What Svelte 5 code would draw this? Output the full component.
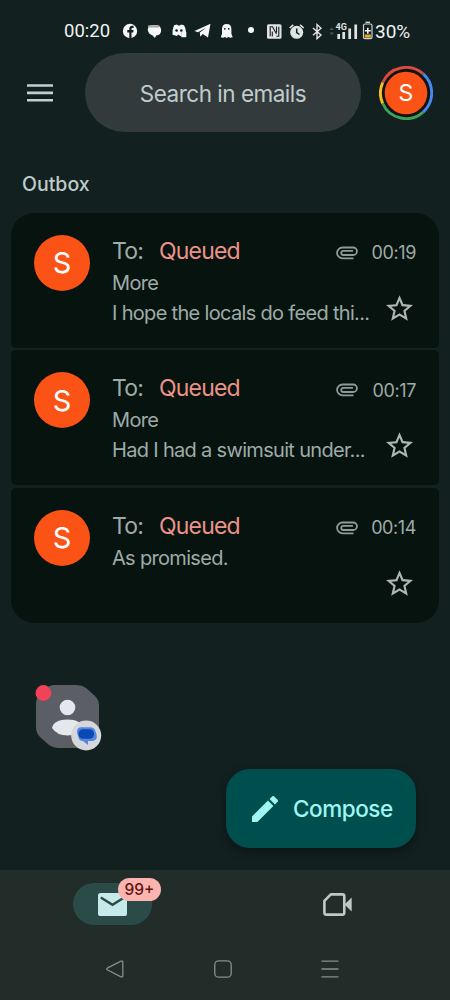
<script lang="ts">
	interface Mail {
		id: number;
		lines: string[];
		time: string;
	}

	const mails: Mail[] = [
		{ id: 1, lines: ['More', 'I hope the locals do feed thi...'], time: '00:19' },
		{ id: 2, lines: ['More', 'Had I had a swimsuit under...'], time: '00:17' },
		{ id: 3, lines: ['As promised.'], time: '00:14' }
	];

	let unread = $state('99+');
</script>

<div class="screen">
	<div class="status">
		<span class="clock">00:20</span>
		<svg class="notifications" viewBox="120 20 136 22" width="136" height="22" fill="#f4f7f6">
			<circle cx="130" cy="31" r="7.2" />
			<path d="M129.3 38.400v-6h-2v-2.4h2v-1.3c0-2 1.1-3 3-3h1.3v2.2h-1.1c-.8 0-1 .5-1 1.2v.9h2.1l-.4 2.4h-1.7v6z" fill="#12201f" />
			<path d="M147.7 30q0-5 6.3-5 7.2 0 7.2 5.2 0 4.7-5 5.3l-1.3 2.6-2.6-2.8q-3.6-1-4.6-5.3z" />
			<path d="M149 26.400h9.500" stroke="#a2aaa8" stroke-width="2.200" stroke-linecap="round" />
			<path d="M174 25.200l3-.8 1 1.100h2l1-1.100 3 .8q2 3 2 6.800h-4.500v4h-1.500l-1-1.300h-1l-1 1.300-4.500-1.300q-.2-5.400 1.500-9.500z" />
			<circle cx="176.600" cy="30.500" r="1.300" fill="#12201f" />
			<circle cx="181.300" cy="30.500" r="1.300" fill="#12201f" />
			<rect x="181.300" y="32" width="5" height="5.200" />
			<path d="M194.500 31l16-7.200-2.500 13.700-5.300-3.400-2.400 2.600-.5-4.100 6.500-5-8.300 4.600z" />
			<path d="M220.800 37.300l1.200-3.500v-4.500q0-5.300 4.700-5.300t4.700 5.300v4.500l1.300 3.500-2.500.5-1.800-.8-1.700 1-1.700-1-1.800.8z" />
			<circle cx="224.800" cy="28.800" r=".9" fill="#12201f" />
			<circle cx="228.700" cy="28.800" r=".9" fill="#12201f" />
			<circle cx="251" cy="30" r="3" />
		</svg>
		<svg class="system" viewBox="265 18 110 24" width="110" height="24" fill="#dfe3e2">
			<rect x="267" y="23.300" width="14.500" height="14.500" rx="1.500" />
			<path d="M270.200 35.200v-9.400h2.300l4 7.200M272.300 30.500v5M278.800 25.800v9.400h-2.300M276.500 25.500v6" fill="none" stroke="#12201f" stroke-width="1.100" />
			<circle cx="296.700" cy="31.300" r="6.500" />
			<path d="M289.700 27l3.600-3.200M303.700 27l-3.600-3.200" stroke="#dfe3e2" stroke-width="1.600" />
			<path d="M296.700 27.500v4l2.800 2" fill="none" stroke="#12201f" stroke-width="1.500" />
			<path d="M313 27l8 7-4 3.700V23.500l4 3.700-8 7" fill="none" stroke="#dfe3e2" stroke-width="1.400" />
			<path d="M329.500 29l2.200-2.600 2.200 2.600zM329.500 31.500l2.200 2.600 2.200-2.600z" fill="#4c5654" />
			<text x="335.500" y="29.300">4G</text>
			<path d="M338.700 33v5M343.700 31v7M349.700 27.500V38M355.700 23.500V38" stroke="#dfe3e2" stroke-width="2.700" />
			<rect x="363.500" y="23" width="8.500" height="14.700" rx="1.500" fill="none" stroke="#cfd4d2" stroke-width="1.200" />
			<path d="M365.500 21.300h4.500" stroke="#cfd4d2" stroke-width="1.400" />
			<path d="M364.700 33.500h6.200v3.200h-6.200z" fill="#e5a83b" />
			<path d="M367.800 26.800v6M364.900 29.800h5.800" stroke="#fff" stroke-width="1.500" />
		</svg>
		<span class="battery">30%</span>
	</div>

	<header>
		<svg class="menu" viewBox="0 0 26 18" width="26" height="18">
			<path d="M0 1.500h26M0 8.900h26M0 16.300h26" stroke="#c0d0d0" stroke-width="2.600" />
		</svg>
		<div class="search"><span>Search in emails</span></div>
		<div class="account">
			<svg viewBox="0 0 54 54" width="54" height="54" fill="none">
				<circle cx="27" cy="27" r="25" fill="#111413" />
				<g stroke-width="2.900">
					<path d="M3.700 16.500A25.700 25.700 0 0 1 44.200 7.900" stroke="#d84b40" />
					<path d="M44.200 7.900A25.700 25.700 0 0 1 44.200 46.100" stroke="#4788ed" />
					<path d="M44.200 46.100A25.700 25.700 0 0 1 3.700 37.500" stroke="#3da25a" />
					<path d="M3.700 37.500A25.700 25.700 0 0 1 3.700 16.500" stroke="#f5c026" />
				</g>
				<circle cx="27" cy="27" r="21.300" fill="#fb5215" />
			</svg>
			<span>S</span>
		</div>
	</header>

	<h2>Outbox</h2>

	<main>
		{#each mails as mail (mail.id)}
			<article>
				<div class="avatar">S</div>
				<div class="body">
					<div class="to"><span>To:</span><span class="queued">Queued</span></div>
					{#each mail.lines as line}
						<p>{line}</p>
					{/each}
				</div>
				<div class="meta">
					<div class="when">
						<svg viewBox="0 0 22 14" width="22" height="14" fill="none" stroke="#8e9c99" stroke-width="1.800">
							<path d="M17.500 12.300H6.500a5.400 5.400 0 0 1 0-10.800h10.700a3.700 3.700 0 0 1 0 7.500H7.300a2.050 2.050 0 0 1 0-4.100h9.700" />
						</svg>
						<span>{mail.time}</span>
					</div>
					<svg class="star" viewBox="2 2 20 19" width="27" height="26" fill="#acb6b3">
						<path d="M22 9.240l-7.190-.62L12 2 9.190 8.630 2 9.240l5.460 4.730L5.820 21 12 17.270 18.180 21l-1.630-7.030L22 9.240zM12 15.400l-3.760 2.270 1-4.280-3.320-2.880 4.380-.38L12 6.100l1.710 4.040 4.380.38-3.320 2.880 1 4.280L12 15.400z" />
					</svg>
				</div>
			</article>
		{/each}
	</main>

	<button class="compose" type="button">
		<svg viewBox="3 3 18 18" width="26" height="26" fill="#9ff6f2">
			<path d="M3 17.250V21h3.750L17.810 9.940l-3.750-3.750L3 17.250zM20.710 7.040a1 1 0 0 0 0-1.410l-2.340-2.340a1 1 0 0 0-1.410 0l-1.830 1.830 3.750 3.750 1.830-1.830z" />
		</svg>
		<span>Compose</span>
	</button>

	<footer>
		<nav class="tabs">
			<div class="tab active">
				<svg viewBox="0 0 29 23" width="29" height="23">
					<rect width="29" height="23" rx="2.600" fill="#c6e9e9" />
					<path d="M2.800 4.500l11.700 7.300 11.700-7.300" fill="none" stroke="#2b4b49" stroke-width="2.500" />
				</svg>
				<span class="badge">{unread}</span>
			</div>
			<div class="tab">
				<svg viewBox="0 0 29 23" width="29" height="23">
					<path d="M7.800 1.400h11.700q1.800 0 1.800 1.800v16.600q0 1.800-1.800 1.800H3.200q-1.800 0-1.800-1.800V7.800z" fill="none" stroke="#bfc9c7" stroke-width="2.600" stroke-linejoin="round" />
					<path d="M21.500 11.500L28.700 4.500v14z" fill="#bfc9c7" />
				</svg>
			</div>
		</nav>
		<nav class="keys">
			<svg viewBox="0 0 18 18" width="18" height="18">
				<path d="M1.200 8.200L15 1.200q1.800-.6 1.800 1v13.600q0 1.600-1.800 1L1.200 9.800q-1-.8 0-1.600z" />
			</svg>
			<svg viewBox="0 0 18 18" width="18" height="18"><rect x=".8" y=".8" width="16.400" height="16.400" rx="3.800" /></svg>
			<svg viewBox="0 0 18 18" width="18" height="18"><path d="M.5 1.200h17M.5 9h17M.5 16.800h17" /></svg>
		</nav>
	</footer>

	<!-- floating chat head -->
	<svg class="bubble" viewBox="34 683 70 70" width="70" height="70">
		<path d="M54 685H77Q82 685 86 688L95 696Q99 700 99 706V732L84 748H58Q53 748 49 745L40 737Q36 733 36 727V704Q36 698 40 693L46 688Q50 685 54 685Z" fill="#5b5f65" />
		<circle cx="67.500" cy="707.500" r="7.800" fill="#e4e7ec" />
		<path d="M52 728q2-8.500 15.500-8.500T83 728q-5 7.500-15.500 7.500T52 728z" fill="#e4e7ec" />
		<circle cx="43.400" cy="693" r="7.900" fill="#f04358" />
		<circle cx="86.200" cy="735.500" r="15" fill="#d5d7da" />
		<path d="M81.500 727.300h8.500q4.500 0 5.500 4l1 3q1.500 6-4 6.700h-4.500v4l-5-4q-4 0-4.800-4.500l-1.200-4q-.5-5.200 4.500-5.200z" fill="#5585dc" />
		<rect x="78.500" y="729.300" width="15.500" height="9.500" rx="4.500" fill="#0849b5" />
	</svg>
</div>

<style>
	:global(body) {
		margin: 0;
		background: #12201f;
	}

	.screen {
		position: relative;
		display: flex;
		flex-direction: column;
		width: 450px;
		height: 1000px;
		overflow: hidden;
		background: #12201f;
		font-family: Inter, "Liberation Sans", sans-serif;
		color: #9fabA8;
	}

	svg {
		display: block;
		flex: none;
	}

	.status {
		display: flex;
		align-items: center;
		height: 53px;
		padding: 9px 0 0 64px;
		box-sizing: border-box;
		font: 500 18.500px Roboto, sans-serif;
		color: #f0f3f2;
	}

	.clock {
		width: 56px;
		font-weight: 400;
	}

	.notifications {
		margin-right: 9px;
	}

	.system text {
		font: 700 9px Roboto, sans-serif;
	}

	.battery {
		font-size: 19px;
		font-weight: 400;
	}

	header {
		display: flex;
		align-items: center;
		height: 79px;
		padding-left: 27px;
	}

	.search {
		display: flex;
		align-items: center;
		justify-content: center;
		width: 276px;
		height: 79px;
		margin: 0 18px 0 32px;
		border-radius: 40px;
		background: #323a3c;
		font-size: 22.500px;
		letter-spacing: -0.500px;
		color: #c0cccb;
	}

	.search span {
		padding-top: 2px;
	}

	.account {
		display: grid;
		place-items: center;
	}

	.account > * {
		grid-area: 1 / 1;
	}

	.account span {
		font-size: 23px;
		color: #fff;
	}

	h2 {
		margin: 40px 0 16.500px 22px;
		font-size: 19.500px;
		font-weight: 500;
		line-height: 24px;
		color: #c0cccb;
	}

	main {
		display: flex;
		flex-direction: column;
		gap: 2.500px;
		padding: 0 11px;
	}

	article {
		display: flex;
		height: 135px;
		box-sizing: border-box;
		padding: 22px 22px 0 23px;
		border-radius: 5px;
		background: #07130f;
	}

	article:first-child {
		border-radius: 23px 23px 5px 5px;
	}

	article:last-child {
		border-radius: 5px 5px 23px 23px;
	}

	.avatar {
		display: flex;
		align-items: center;
		justify-content: center;
		flex: none;
		width: 56px;
		height: 56px;
		margin-right: 22px;
		border-radius: 50%;
		background: #fb5215;
		font-size: 29px;
		color: #fff;
	}

	.body {
		width: 224px;
		white-space: nowrap;
	}

	.to {
		display: flex;
		height: 33px;
		font-size: 23px;
		line-height: 33px;
	}

	.to span {
		width: 47px;
		letter-spacing: -0.800px;
	}

	.to .queued {
		color: #ec9287;
	}

	p {
		margin: 0;
		font-size: 20px;
		line-height: 30px;
		letter-spacing: -0.680px;
	}

	.meta {
		display: flex;
		flex-direction: column;
		align-items: flex-end;
		width: 80px;
	}

	.when {
		display: flex;
		align-items: center;
		justify-content: space-between;
		width: 80px;
		height: 36px;
		font-size: 18px;
		letter-spacing: -0.400px;
	}

	.star {
		margin: 24px 3px 0 0;
	}

	.compose {
		display: flex;
		align-items: center;
		align-self: flex-end;
		width: 190px;
		height: 79px;
		margin: 146.500px 34px 0 0;
		padding: 0 0 0 26px;
		border: 0;
		border-radius: 24px;
		background: #004f4f;
		box-shadow: 0 4px 10px rgba(0, 0, 0, 0.35);
		font: 500 22.500px Inter, sans-serif;
		color: #9ff6f2;
	}

	.compose span {
		margin-left: 15px;
		letter-spacing: -0.450px;
	}

	footer {
		height: 130px;
		margin-top: auto;
		background: #222d29;
	}

	.tabs {
		display: grid;
		grid-template-columns: 1fr 1fr;
		justify-items: center;
		padding-top: 13px;
	}

	.tab {
		position: relative;
		display: flex;
		align-items: center;
		justify-content: center;
		width: 79px;
		height: 42px;
		border-radius: 21px;
	}

	.active {
		background: #2b4b49;
	}

	.badge {
		position: absolute;
		top: -5px;
		left: 45px;
		width: 43px;
		border-radius: 12px;
		background: #fbb4af;
		font-size: 15.500px;
		font-weight: 500;
		line-height: 23px;
		text-align: center;
		color: #5f1512;
	}

	.keys {
		display: flex;
		justify-content: space-between;
		padding: 35px 111px 0 106px;
		fill: none;
		stroke: #82908c;
		stroke-width: 1.300;
	}

	.bubble {
		position: absolute;
		left: 34px;
		top: 683px;
	}
</style>
